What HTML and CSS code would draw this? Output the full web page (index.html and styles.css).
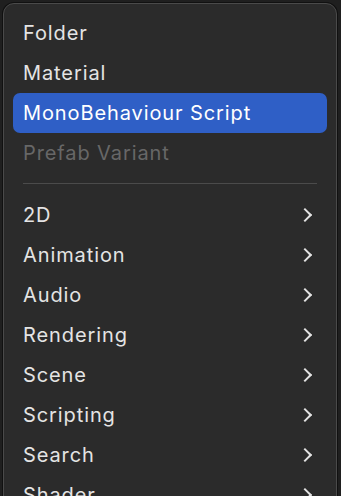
FILE: index.html
```html
<!DOCTYPE html>
<html lang="en">
<head>
    <meta charset="UTF-8">
    <title>Create menu</title>
    <link rel="stylesheet" href="styles.css">
</head>
<body>

    <!-- 컨텍스트 메뉴 -->
    <div class="menu">
        <div class="item">Folder</div>
        <div class="item">Material</div>
        <div class="item active">MonoBehaviour Script</div>
        <div class="item disabled">Prefab Variant</div>

        <div class="sep"></div>

        <div class="item sub">2D <span class="chev"></span></div>
        <div class="item sub">Animation <span class="chev"></span></div>
        <div class="item sub">Audio <span class="chev"></span></div>
        <div class="item sub">Rendering <span class="chev"></span></div>
        <div class="item sub">Scene <span class="chev"></span></div>
        <div class="item sub">Scripting <span class="chev"></span></div>
        <div class="item sub">Search <span class="chev"></span></div>
        <div class="item sub">Shader <span class="chev"></span></div>
    </div>

</body>
</html>
```

FILE: styles.css
```css
* {
    margin: 0;
    padding: 0;
    box-sizing: border-box;
}

body {
    width: 341px;
    height: 496px;
    overflow: hidden;
    background-color: #1f1f1f;
    font-family: "Inter", "Liberation Sans", sans-serif;
}

.menu {
    margin: 3px 0 0 3px;
    width: 334px;
    height: 520px;
    padding-top: 9px;
    background-color: #2b2b2b;
    border: 1px solid #4a4a4a;
    border-radius: 11px;
    box-shadow: 0 0 0 1px #111;
}

.item {
    display: flex;
    align-items: center;
    justify-content: space-between;
    height: 40px;
    margin: 0 9px;
    padding: 0 14px 0 10px;
    font-size: 20px;
    letter-spacing: 0.9px;
    color: #e4e4e4;
    border-radius: 7px;
}

.item.active {
    background-color: #2f5fc6;
    color: #ffffff;
}

.item.disabled {
    color: #676767;
}

.sep {
    height: 1px;
    margin: 10px 19px 11px 19px;
    background-color: #4b4b4b;
}

.chev {
    width: 10px;
    height: 10px;
    margin-right: 3px;
    border-top: 2.5px solid #e4e4e4;
    border-right: 2.5px solid #e4e4e4;
    transform: rotate(45deg);
}
```
